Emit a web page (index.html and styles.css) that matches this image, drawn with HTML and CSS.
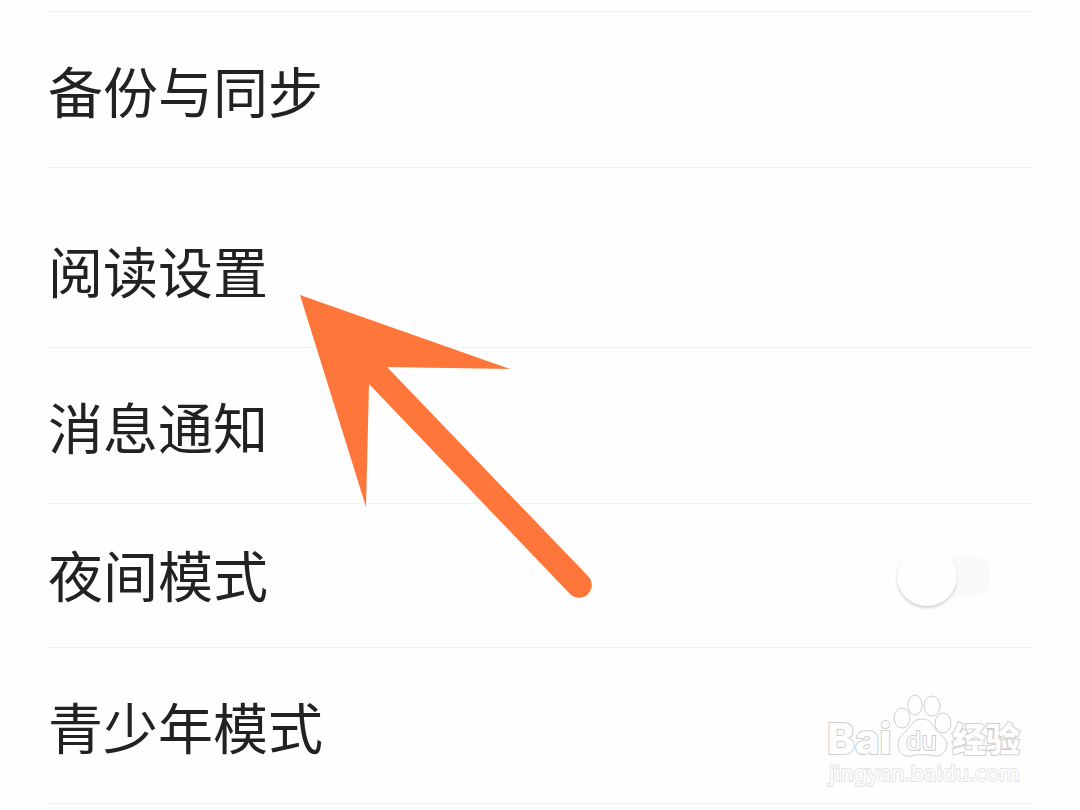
FILE: index.html
```html
<!DOCTYPE html>
<html lang="zh-CN">
<head>
<meta charset="utf-8">
<meta name="viewport" content="width=device-width, initial-scale=1">
<title>设置</title>
<link rel="stylesheet" href="styles.css">
</head>
<body>
<main class="settings">
  <ul class="list">
    <li class="row"><a class="label" href="#backup">备份与同步</a></li>
    <li class="row row-group">
      <a class="label" href="#reading">阅读设置</a>
      <svg class="arrow" viewBox="0 0 294 304" aria-hidden="true">
        <path d="M0 0L210 74L87 72L288 281A12.500 12.500 0 0 1 270 299L69 89L66 212Z"/>
      </svg>
    </li>
    <li class="row"><a class="label" href="#notice">消息通知</a></li>
    <li class="row row-switch">
      <label class="label" for="night">夜间模式</label>
      <input class="switch" type="checkbox" role="switch" id="night">
    </li>
    <li class="row">
      <a class="label" href="#teen">青少年模式</a>
      <svg class="watermark" viewBox="0 0 206 100">
        <g class="paw">
          <ellipse cx="78" cy="28" rx="8" ry="10"/>
          <ellipse cx="91" cy="15" rx="7" ry="10"/>
          <ellipse cx="108" cy="16" rx="8" ry="10"/>
          <ellipse cx="119" cy="33" rx="8" ry="10"/>
          <path d="M98 29C89 29 86 37 81 42C76 47 74 50 74 56C74 63 80 67 87 66C95 64 102 64 110 66C118 67 123 61 123 54C122 48 116 45 112 40C108 34 106 29 98 29Z"/>
        </g>
        <text class="mark latin" x="3" y="64">Bai</text>
        <text class="mark du" x="82" y="60">du</text>
        <text class="mark han" x="128" y="62">经验</text>
        <text class="mark url" x="5" y="91">jingyan.baidu.com</text>
      </svg>
    </li>
  </ul>
</main>
</body>
</html>
```
FILE: styles.css
```css
body {
  margin: 0;
  background: #fefefe;
  color: #222;
  font-family: "Noto Sans CJK SC", sans-serif;
}

.settings {
  padding: 11px 48px 0;
}

.list {
  margin: 0;
  padding: 0;
  list-style: none;
  border-top: 1px solid #f2f2f2;
}

.row {
  position: relative;
  display: flex;
  align-items: center;
  justify-content: space-between;
  padding: 36px 0;
  border-bottom: 1px solid #f2f2f2;
}

.row-group {
  padding-top: 60px;
}

.row-switch {
  padding: 28px 0 32px;
}

.label {
  flex: 1;
  color: inherit;
  font-size: 55px;
  line-height: 83px;
  text-decoration: none;
}

.switch {
  appearance: none;
  display: flex;
  align-items: center;
  width: 94px;
  height: 40px;
  margin: 4px 41px 0 0;
  border-radius: 20px;
  background: #fafafa;
}

.switch::before {
  content: "";
  width: 60px;
  height: 60px;
  border-radius: 50%;
  background: #fefefe;
  box-shadow: 0 2px 3px #d2d2d2;
}

.switch:checked {
  justify-content: flex-end;
  background: #ff763a;
}

.arrow {
  position: absolute;
  z-index: 1;
  top: 127px;
  left: 252px;
  width: 294px;
  height: 304px;
  fill: #ff763a;
  pointer-events: none;
}

.watermark {
  position: absolute;
  right: 2px;
  bottom: 13px;
  width: 206px;
  height: 100px;
  overflow: visible;
  fill: #fefefe;
  stroke: #cfcfcf;
  stroke-width: 1px;
  pointer-events: none;
}

.mark {
  font-family: "Noto Sans", "Noto Sans CJK SC", sans-serif;
  stroke-width: 2px;
  paint-order: stroke;
}

.latin {
  font-family: Inter, sans-serif;
  font-size: 42px;
  font-weight: 800;
}

.du {
  font-size: 25px;
  font-weight: 400;
}

.han {
  font-size: 34px;
  font-weight: 900;
}

.url {
  font-size: 22px;
  stroke: #e4e4e4;
}
```
